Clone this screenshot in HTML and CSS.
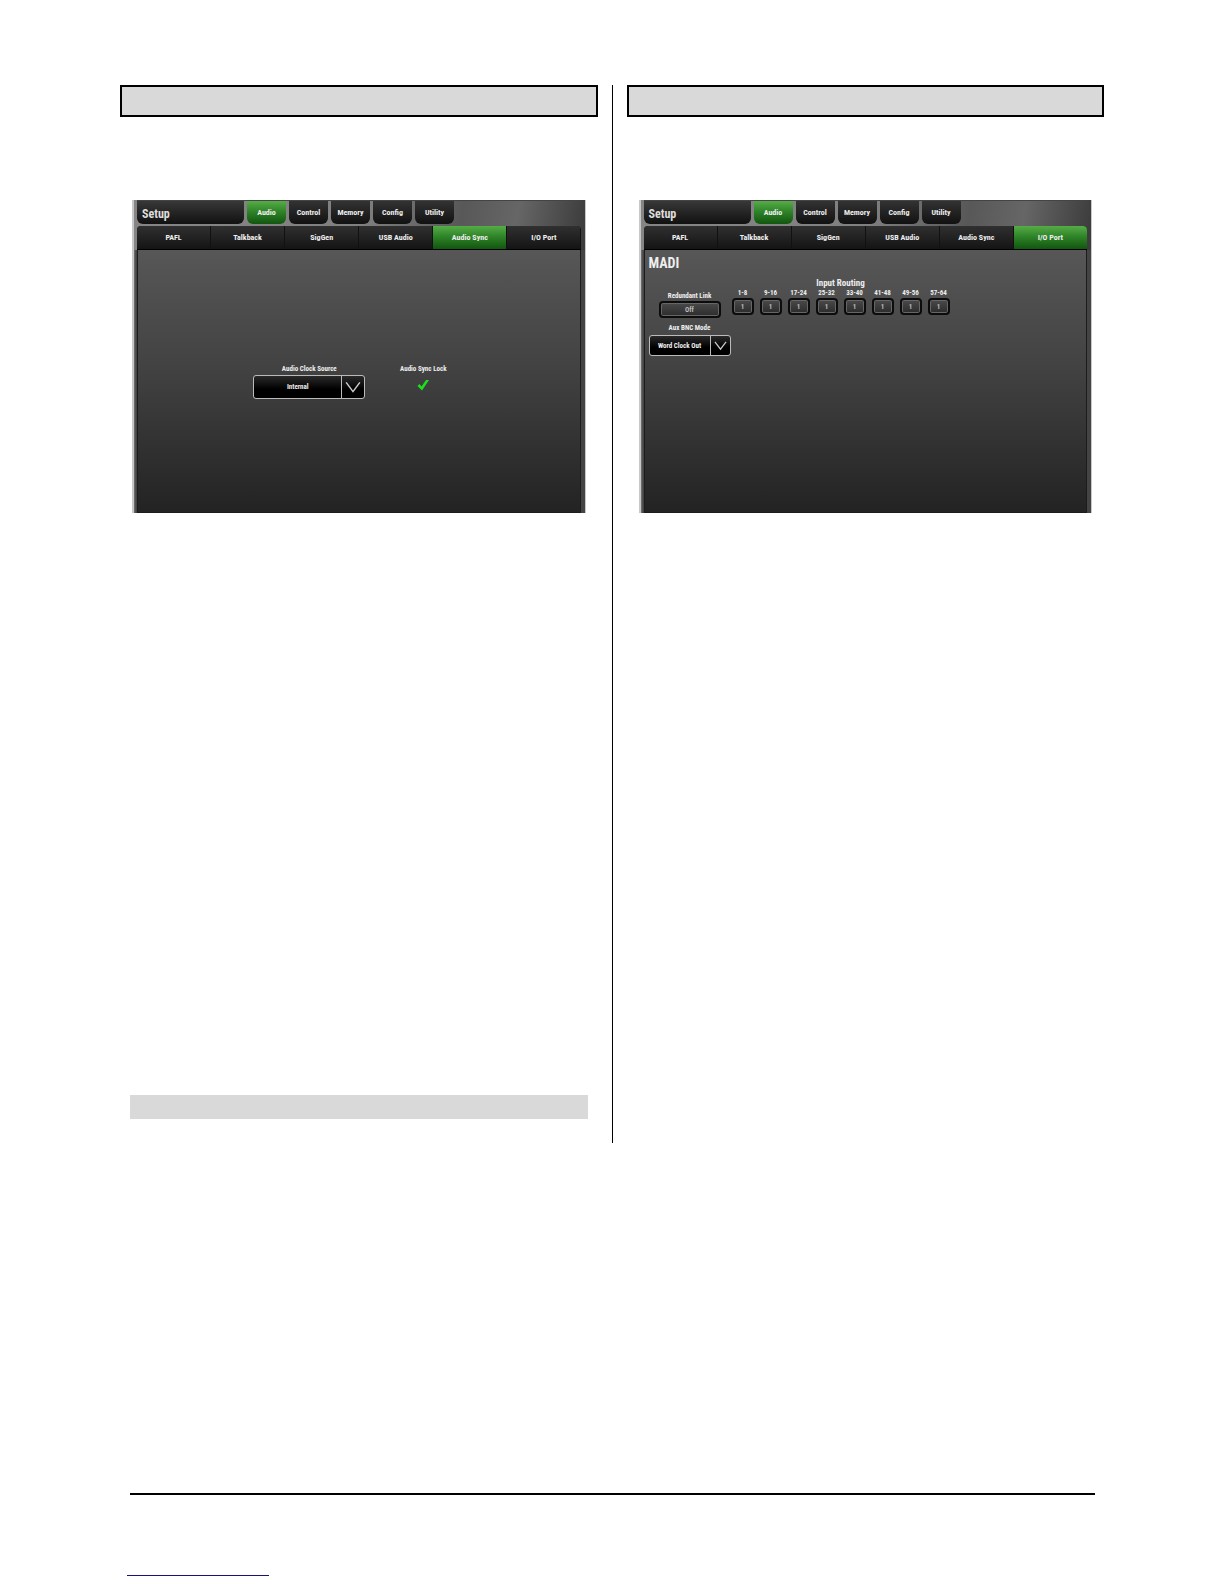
FILE: index.html
```
<!DOCTYPE html>
<html lang="en">
<head>
<meta charset="utf-8">
<title>Setup: Audio Sync and I/O Port</title>
<link rel="stylesheet" href="styles.css">
</head>
<body>
<main class="page">
  <div class="columns">
    <section class="column">
      <div class="title-bar"></div>
      <div class="screen">
        <header class="top-tabs">
          <h2 class="screen-title">Setup</h2>
          <button class="tab active" type="button">Audio</button>
          <button class="tab" type="button">Control</button>
          <button class="tab" type="button">Memory</button>
          <button class="tab" type="button">Config</button>
          <button class="tab" type="button">Utility</button>
        </header>
        <nav class="sub-tabs">
          <button class="sub-tab" type="button">PAFL</button>
          <button class="sub-tab" type="button">Talkback</button>
          <button class="sub-tab" type="button">SigGen</button>
          <button class="sub-tab" type="button">USB Audio</button>
          <button class="sub-tab active" type="button">Audio Sync</button>
          <button class="sub-tab" type="button">I/O Port</button>
        </nav>
        <div class="panel sync-panel">
          <div class="field clock-field">
            <label class="label" for="clock">Audio Clock Source</label>
            <div class="dropdown large">
              <select id="clock"><option>Internal</option></select>
              <svg class="chevron" viewBox="0 0 14 10" aria-hidden="true"><path d="M1 1 L7 9 L13 1"/></svg>
            </div>
          </div>
          <div class="field lock-field">
            <span class="label">Audio Sync Lock</span>
            <svg class="check" viewBox="0 0 12 12" role="img" aria-label="Locked"><path d="M0.500 7 L2.500 5 L4.500 7.500 L9 1 L12 1 L5 11.500 Z"/></svg>
          </div>
        </div>
      </div>
      <div class="note-bar"></div>
    </section>
    <div class="divider"></div>
    <section class="column">
      <div class="title-bar"></div>
      <div class="screen">
        <header class="top-tabs">
          <h2 class="screen-title">Setup</h2>
          <button class="tab active" type="button">Audio</button>
          <button class="tab" type="button">Control</button>
          <button class="tab" type="button">Memory</button>
          <button class="tab" type="button">Config</button>
          <button class="tab" type="button">Utility</button>
        </header>
        <nav class="sub-tabs">
          <button class="sub-tab" type="button">PAFL</button>
          <button class="sub-tab" type="button">Talkback</button>
          <button class="sub-tab" type="button">SigGen</button>
          <button class="sub-tab" type="button">USB Audio</button>
          <button class="sub-tab" type="button">Audio Sync</button>
          <button class="sub-tab active" type="button">I/O Port</button>
        </nav>
        <div class="panel port-panel">
          <h3 class="port-title">MADI</h3>
          <div class="port-row">
            <div class="field link-field">
              <label class="label" for="redundant">Redundant Link</label>
              <button class="key wide" id="redundant" type="button">Off</button>
            </div>
            <div class="routing">
              <h4 class="routing-title">Input Routing</h4>
              <div class="routing-keys">
                <div class="field"><label class="label" for="r1">1-8</label><button class="key" id="r1" type="button">1</button></div>
                <div class="field"><label class="label" for="r2">9-16</label><button class="key" id="r2" type="button">1</button></div>
                <div class="field"><label class="label" for="r3">17-24</label><button class="key" id="r3" type="button">1</button></div>
                <div class="field"><label class="label" for="r4">25-32</label><button class="key" id="r4" type="button">1</button></div>
                <div class="field"><label class="label" for="r5">33-40</label><button class="key" id="r5" type="button">1</button></div>
                <div class="field"><label class="label" for="r6">41-48</label><button class="key" id="r6" type="button">1</button></div>
                <div class="field"><label class="label" for="r7">49-56</label><button class="key" id="r7" type="button">1</button></div>
                <div class="field"><label class="label" for="r8">57-64</label><button class="key" id="r8" type="button">1</button></div>
              </div>
            </div>
          </div>
          <div class="field bnc-field">
            <label class="label" for="bnc">Aux BNC Mode</label>
            <div class="dropdown">
              <select id="bnc"><option>Word Clock Out</option></select>
              <svg class="chevron" viewBox="0 0 14 10" aria-hidden="true"><path d="M1 1 L7 9 L13 1"/></svg>
            </div>
          </div>
        </div>
      </div>
    </section>
  </div>
  <footer class="footer">
    <a class="footer-link" href="#" aria-label="Home"></a>
  </footer>
</main>
</body>
</html>
```

FILE: styles.css
```
* {
  box-sizing: border-box;
}

body {
  margin: 0;
  background: #fff;
  font-family: "Roboto Condensed", "Open Sans Condensed", "Noto Sans Condensed", Roboto, "Liberation Sans", sans-serif;
  font-weight: 700;
  color: #eee;
}

h2, h3, h4 {
  margin: 0;
}

button, select {
  margin: 0;
  padding: 0;
  border: 0;
  font: inherit;
  color: inherit;
}

.page {
  padding: 85px 120px 8px;
}

.columns {
  display: grid;
  grid-template-columns: 1fr 1px 1fr;
  gap: 14px;
}

.divider {
  background: #000;
}

.column {
  display: flex;
  flex-direction: column;
  padding-bottom: 24px;
}

.title-bar {
  height: 32px;
  border: 2px solid #000;
  background: #d9d9d9;
}

.note-bar {
  height: 24px;
  margin: 582px 10px 0;
  background: #d9d9d9;
}

/* Mixer screen */
.screen {
  display: flex;
  flex-direction: column;
  margin: 83px 12px 0;
  padding: 0 4px 0 3px;
  border: solid #c8c8c8;
  border-width: 0 1px 0 2px;
  background: linear-gradient(100deg, #858585 0%, #808080 50%, #585858 72%, #666 84%, #3a3a3a 100%) top / 100% 50px no-repeat, linear-gradient(90deg, #777, #444 2px, #444);
}

.top-tabs {
  display: flex;
  gap: 3px;
  height: 24px;
  border-top: 1px solid #444;
}

.screen-title {
  width: 107px;
  padding: 5px 5px 0;
  border-radius: 0 0 6px 6px;
  background: linear-gradient(#383838, #111);
  font-size: 12px;
  line-height: 16px;
  color: #ddd;
}

.tab {
  width: 39px;
  border-radius: 0 0 6px 6px;
  background: linear-gradient(#333, #111);
  font-size: 8px;
}

.sub-tabs {
  display: flex;
  margin-top: 2px;
  border-bottom: 1px solid #000;
  border-radius: 4px 4px 0 0;
  background: #111;
  overflow: hidden;
}

.sub-tab {
  flex: 1;
  height: 23px;
  border-right: 1px solid #111;
  background: linear-gradient(#303030, #141414);
  font-size: 8px;
}

.sub-tab:last-child {
  border-right: 0;
}

.tab.active, .sub-tab.active {
  background: linear-gradient(#55ad46, #2c8026 50%, #12560f);
}

.panel {
  height: 263px;
  border: solid #1c1c1c;
  border-width: 0 1px 1px;
  background: linear-gradient(#575757, #424242 45%, #232323);
}

.field {
  display: flex;
  flex-direction: column;
  align-items: center;
}

.label {
  font-size: 7px;
  line-height: 8px;
  white-space: nowrap;
}

/* Audio Sync */
.sync-panel {
  display: flex;
  gap: 28px;
  padding: 115px 0 0 26%;
}

.sync-panel .field {
  gap: 2px;
}

.lock-field {
  width: 60px;
}

.dropdown {
  display: grid;
  grid-template-columns: 1fr 20px;
  width: 82px;
  height: 21px;
  border: 1px solid #bbb;
  border-radius: 3px;
  background: linear-gradient(#2a2a2a, #000 60%);
}

.dropdown.large {
  grid-template-columns: 1fr 23px;
  width: 112px;
  height: 24px;
}

.dropdown select {
  min-width: 0;
  appearance: none;
  background: transparent;
  font-size: 7px;
  text-align: center;
  text-align-last: center;
}

.chevron {
  width: 100%;
  height: 100%;
  padding: 4px 3px;
  border-left: 1px solid #bbb;
  fill: none;
  stroke: #ccc;
  stroke-width: 1.3;
}

.check {
  width: 12px;
  height: 12px;
  margin-top: 4px;
  fill: #1be01b;
}

/* I/O Port */
.port-panel {
  padding: 5px 4px;
}

.port-title {
  font-size: 14px;
  line-height: 16px;
}

.port-row {
  display: flex;
  align-items: flex-end;
  gap: 11px;
  margin-top: 6px;
  padding-left: 10px;
}

.link-field {
  gap: 1px;
}

.routing {
  padding-bottom: 3px;
}

.routing-title {
  font-size: 9px;
  line-height: 12px;
  text-align: center;
}

.routing-keys {
  display: flex;
  gap: 6px;
}

.routing-keys .field {
  gap: 1px;
  width: 22px;
}

.key {
  width: 22px;
  height: 17px;
  border: 2px solid #0c0c0c;
  border-radius: 4px;
  background: linear-gradient(#4a4a4a, #2c2c2c);
  box-shadow: inset 0 0 0 1px #666;
  font-size: 7px;
  line-height: 8px;
  color: #bbb;
}

.key.wide {
  width: 62px;
}

.bnc-field {
  gap: 3px;
  width: 82px;
  margin-top: 6px;
}

.footer {
  margin: 350px 9px 0 10px;
  border-top: 2px solid #000;
}

.footer-link {
  display: block;
  width: 142px;
  height: 81px;
  margin-left: -3px;
  border-bottom: 1px solid #14147a;
}
```
